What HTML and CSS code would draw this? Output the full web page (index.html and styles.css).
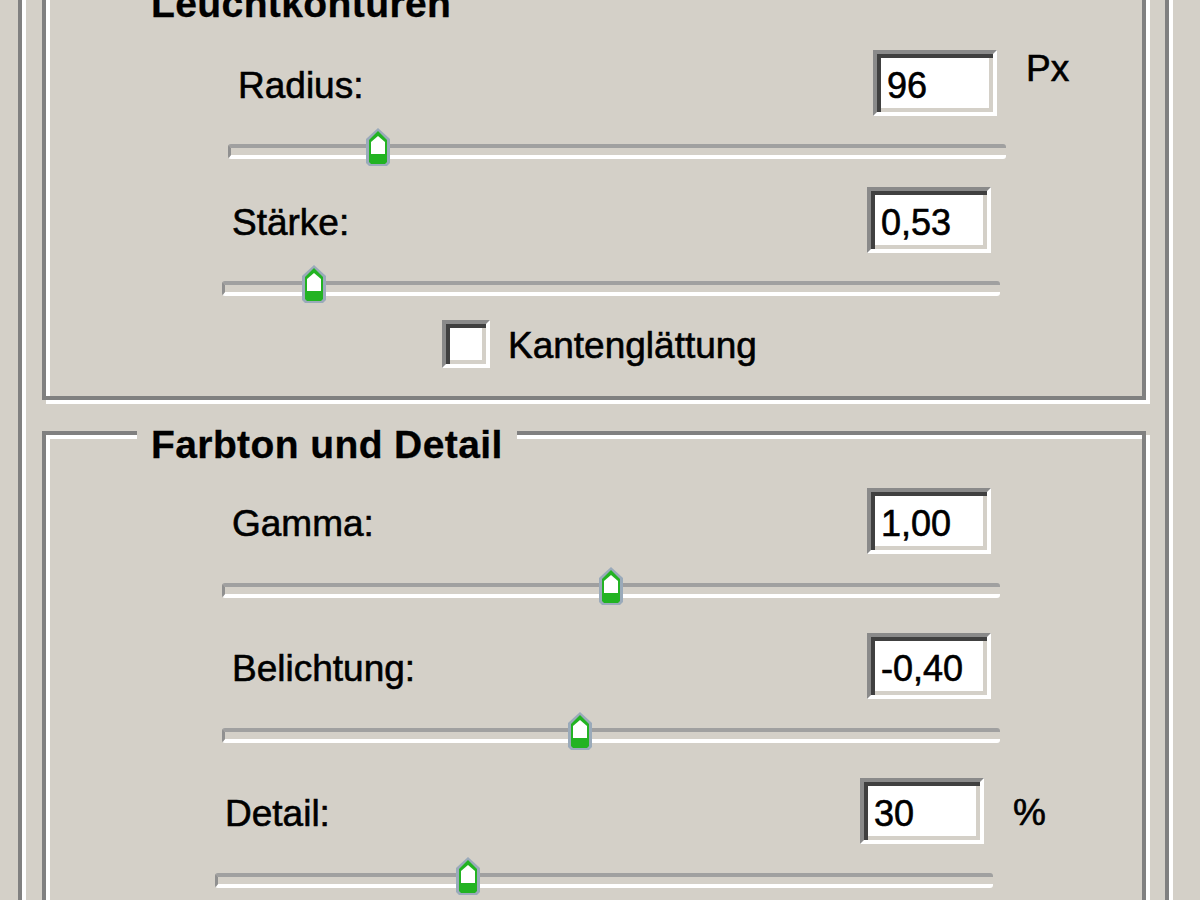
FILE: index.html
```html
<!DOCTYPE html>
<html lang="de">
<head>
    <meta charset="UTF-8">
    <title>HDR-Konvertierung</title>
    <link rel="stylesheet" href="styles.css">
</head>
<body>
    <div class="dialog">
        <div class="group group-first">
            <span class="legend">Leuchtkonturen</span>

            <div class="field shift-right">
                <div class="field-head">
                    <label for="radius">Radius:</label>
                    <input type="text" id="radius" class="num" value="96">
                </div>
                <span class="unit">Px</span>
                <div class="slider">
                    <span class="thumb" style="left: 19.3%"><svg width="26" height="38" viewBox="0 0 26 38"><path d="M13 0 L25 11 V35 L22 38 H4 L1 35 V11 Z" fill="#9aaaba"/><path d="M13 3 L22 12 V34 L20 36 H6 L4 34 V12 Z" fill="#22b322"/><path d="M13 8 L20 14 V26 H6 V14 Z" fill="#fff"/></svg></span>
                </div>
            </div>

            <div class="field">
                <div class="field-head">
                    <label for="staerke">Stärke:</label>
                    <input type="text" id="staerke" class="num" value="0,53">
                </div>
                <div class="slider">
                    <span class="thumb" style="left: 11.8%"><svg width="26" height="38" viewBox="0 0 26 38"><path d="M13 0 L25 11 V35 L22 38 H4 L1 35 V11 Z" fill="#9aaaba"/><path d="M13 3 L22 12 V34 L20 36 H6 L4 34 V12 Z" fill="#22b322"/><path d="M13 8 L20 14 V26 H6 V14 Z" fill="#fff"/></svg></span>
                </div>
            </div>

            <div class="check-row">
                <input type="checkbox" id="glaettung" class="check">
                <label for="glaettung">Kantenglättung</label>
            </div>
        </div>

        <div class="group group-second">
            <span class="legend">Farbton und Detail</span>

            <div class="field">
                <div class="field-head">
                    <label for="gamma">Gamma:</label>
                    <input type="text" id="gamma" class="num" value="1,00">
                </div>
                <div class="slider">
                    <span class="thumb" style="left: 50%"><svg width="26" height="38" viewBox="0 0 26 38"><path d="M13 0 L25 11 V35 L22 38 H4 L1 35 V11 Z" fill="#9aaaba"/><path d="M13 3 L22 12 V34 L20 36 H6 L4 34 V12 Z" fill="#22b322"/><path d="M13 8 L20 14 V26 H6 V14 Z" fill="#fff"/></svg></span>
                </div>
            </div>

            <div class="field">
                <div class="field-head">
                    <label for="belichtung">Belichtung:</label>
                    <input type="text" id="belichtung" class="num" value="-0,40">
                </div>
                <div class="slider">
                    <span class="thumb" style="left: 46%"><svg width="26" height="38" viewBox="0 0 26 38"><path d="M13 0 L25 11 V35 L22 38 H4 L1 35 V11 Z" fill="#9aaaba"/><path d="M13 3 L22 12 V34 L20 36 H6 L4 34 V12 Z" fill="#22b322"/><path d="M13 8 L20 14 V26 H6 V14 Z" fill="#fff"/></svg></span>
                </div>
            </div>

            <div class="field shift-left">
                <div class="field-head">
                    <label for="detail">Detail:</label>
                    <input type="text" id="detail" class="num" value="30">
                </div>
                <span class="unit unit-low">%</span>
                <div class="slider">
                    <span class="thumb" style="left: 32.5%"><svg width="26" height="38" viewBox="0 0 26 38"><path d="M13 0 L25 11 V35 L22 38 H4 L1 35 V11 Z" fill="#9aaaba"/><path d="M13 3 L22 12 V34 L20 36 H6 L4 34 V12 Z" fill="#22b322"/><path d="M13 8 L20 14 V26 H6 V14 Z" fill="#fff"/></svg></span>
                </div>
            </div>
        </div>
    </div>
</body>
</html>
```

FILE: styles.css
```css
body {
    margin: 0;
    background-color: #d4d0c8;
    font-family: Tahoma, "Liberation Sans", Arial, sans-serif;
    font-size: 37px;
    color: #000;
    -webkit-text-stroke: 0.6px #000;
    overflow: hidden;
}

/* aeusserer Rahmen, oben abgeschnitten */
.dialog {
    margin-left: 18px;
    width: 1151px;
    height: 960px;
    box-sizing: border-box;
    border-left: 4px solid #808080;
    border-right: 4px solid #808080;
    box-shadow: inset 4px 0 0 #fff, 4px 0 0 #fff;
    padding: 0 19px 0 20px;
}

.group {
    position: relative;
    border: 4px solid #808080;
    box-shadow: inset 4px 4px 0 #fff, 4px 4px 0 #fff;
    padding-left: 176px;
}

.group-first {
    margin-top: -10px;
    padding-top: 56px;
    padding-bottom: 28px;
}

.group-second {
    margin-top: 31px;
    padding-top: 53px;
    padding-bottom: 60px;
}

.group .legend {
    position: absolute;
    top: -12px;
    left: 91px;
    padding: 0 14px;
    background-color: #d4d0c8;
    font-weight: bold;
    font-size: 39px;
    letter-spacing: 0.4px;
    line-height: normal;
    -webkit-text-stroke: 0.3px #000;
}

.field {
    display: grid;
    grid-template-columns: 778px auto;
    margin-bottom: 19px;
}

.group-second .field {
    margin-bottom: 26px;
}

.field.shift-right {
    margin-left: 6px;
}

.field.shift-left {
    margin-left: -7px;
}

.field-head {
    grid-column: 1;
    grid-row: 1;
    display: flex;
    align-items: center;
    justify-content: space-between;
    height: 66px;
    padding: 0 9px 0 10px;
}

.field-head label {
    padding-top: 5px;
}

.unit {
    grid-column: 2;
    grid-row: 1;
    padding-left: 20px;
    padding-top: 0;
    line-height: 1;
}

.unit-low {
    padding-top: 16px;
}

.num {
    width: 124px;
    height: 66px;
    box-sizing: border-box;
    border: 4px solid;
    border-color: #8a8a8a #fff #fff #8a8a8a;
    box-shadow: inset 4px 4px 0 #404040, inset -4px -4px 0 #d4d0c8;
    background-color: #fff;
    padding: 6px 0 0 10px;
    margin: 0;
    font-family: Tahoma, "Liberation Sans", Arial, sans-serif;
    font-size: 36px;
    color: #000;
    -webkit-text-stroke: 0.6px #000;
    outline: none;
}

.slider {
    grid-column: 1;
    grid-row: 2;
    position: relative;
    height: 40px;
    margin-top: 12px;
}

.group-second .slider {
    margin-top: 13px;
}

.slider::before {
    content: "";
    position: absolute;
    left: 0;
    right: 0;
    top: 16px;
    height: 7px;
    border-top: 4px solid #a0a0a0;
    border-bottom: 4px solid #fff;
    border-left: 3px solid #909090;
    border-radius: 3px;
}

.thumb {
    position: absolute;
    top: 0;
    transform: translateX(-50%);
    width: 26px;
    height: 38px;
}

.thumb svg {
    display: block;
}

.check-row {
    display: flex;
    align-items: center;
    margin-left: 220px;
    margin-top: -4px;
}

.check {
    appearance: none;
    -webkit-appearance: none;
    width: 48px;
    height: 48px;
    margin: 0 18px 0 0;
    box-sizing: border-box;
    border: 4px solid;
    border-color: #8a8a8a #fff #fff #8a8a8a;
    box-shadow: inset 4px 4px 0 #404040, inset -4px -4px 0 #d4d0c8;
    background-color: #fff;
}

.check-row label {
    padding-top: 4px;
}
```
